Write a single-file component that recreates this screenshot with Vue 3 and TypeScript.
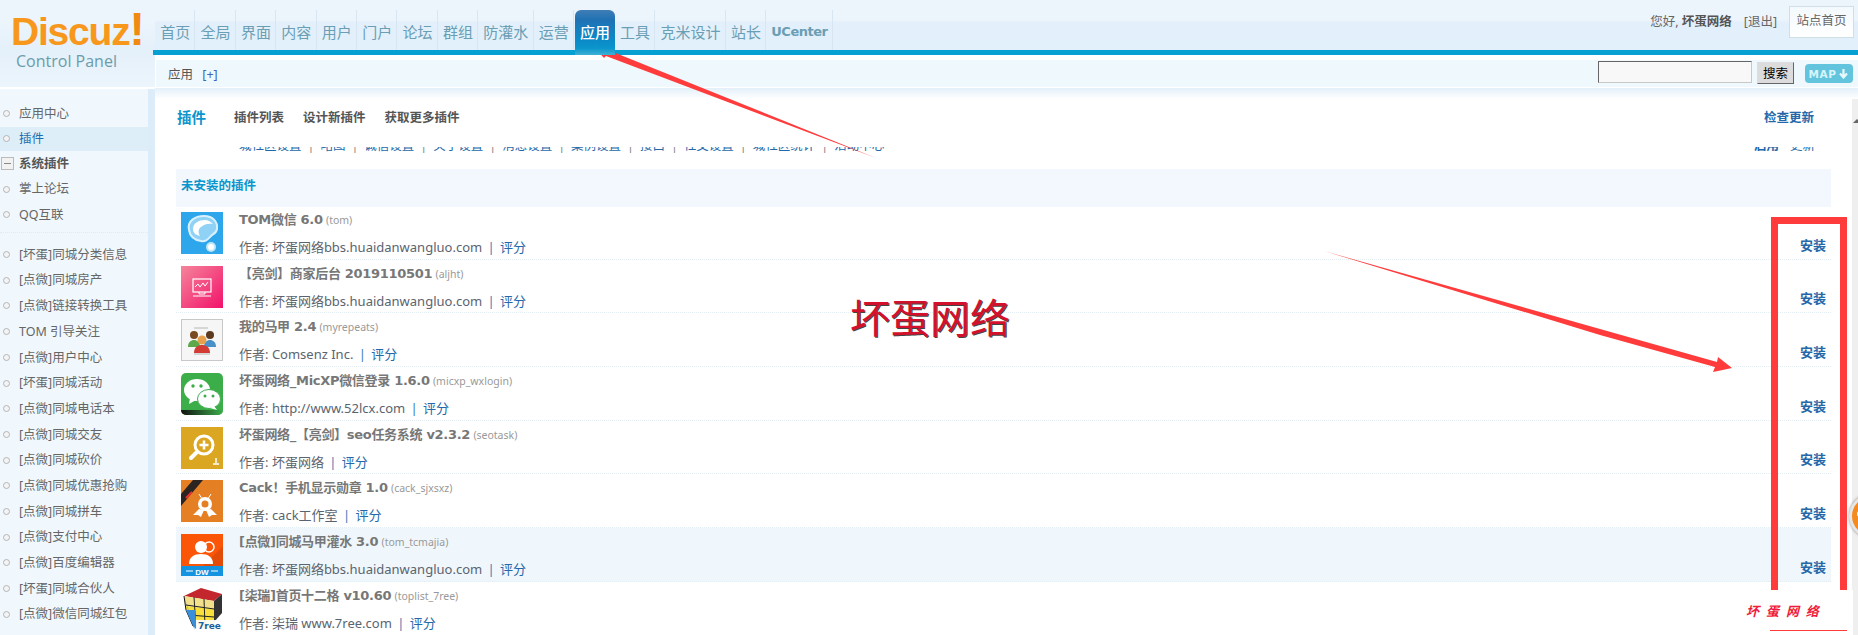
<script setup lang="ts">
const navItems: string[] = ['首页','全局','界面','内容','用户','门户','论坛','群组','防灌水','运营','应用','工具','克米设计','站长','UCenter']
const sideTop: { t: string; on?: boolean; group?: boolean }[] = [
  { t: '应用中心' }, { t: '插件', on: true }, { t: '系统插件', group: true }, { t: '掌上论坛' }, { t: 'QQ互联' }
]
const sideList: string[] = ['[坏蛋]同城分类信息','[点微]同城房产','[点微]链接转换工具','TOM 引导关注','[点微]用户中心','[坏蛋]同城活动','[点微]同城电话本','[点微]同城交友','[点微]同城砍价','[点微]同城优惠抢购','[点微]同城拼车','[点微]支付中心','[点微]百度编辑器','[坏蛋]同城合伙人','[点微]微信同城红包']
const cutLinks: string[] = ['城社区设置','略图','诚信设置','关于设置','消息设置','案例设置','接口','社交设置','城社区统计','活动中心']
interface Row { icon: string; title: string; id: string; author: string; hl?: boolean }
const site = '坏蛋网络bbs.huaidanwangluo.com'
const rows: Row[] = [
  { icon: 'tom', title: 'TOM微信 6.0', id: '(tom)', author: site },
  { icon: 'pink', title: '【亮剑】商家后台 2019110501', id: '(aljht)', author: site },
  { icon: 'group', title: '我的马甲 2.4', id: '(myrepeats)', author: 'Comsenz Inc.' },
  { icon: 'wx', title: '坏蛋网络_MicXP微信登录 1.6.0', id: '(micxp_wxlogin)', author: 'http://www.52lcx.com' },
  { icon: 'seo', title: '坏蛋网络_【亮剑】seo任务系统 v2.3.2', id: '(seotask)', author: '坏蛋网络' },
  { icon: 'cack', title: 'Cack！手机显示勋章 1.0', id: '(cack_sjxsxz)', author: 'cack工作室' },
  { icon: 'dw', title: '[点微]同城马甲灌水 3.0', id: '(tom_tcmajia)', author: site, hl: true },
  { icon: 'cube', title: '[柒瑞]首页十二格 v10.60', id: '(toplist_7ree)', author: '柒瑞 www.7ree.com' }
]
</script>

<template>
  <div class="page">
    <aside class="aside">
      <div class="logo">
        <div class="discuz">Discuz<span class="bang">!</span></div>
        <div class="cp">Control Panel</div>
      </div>
      <div class="side">
        <ul class="side-top">
          <li v-for="s in sideTop" :key="s.t" :class="{ on: s.on, group: s.group }">
            <i v-if="s.group" class="minus"></i><i v-else class="dot"></i>{{ s.t }}
          </li>
        </ul>
        <ul class="side-list">
          <li v-for="s in sideList" :key="s"><i class="dot"></i>{{ s }}</li>
        </ul>
      </div>
    </aside>

    <div class="main">
      <header class="top">
        <nav class="nav">
          <a v-for="n in navItems" :key="n" :class="{ cur: n === '应用', en: n === 'UCenter' }">{{ n }}</a>
        </nav>
        <div class="user">
          <span>您好, <b>坏蛋网络</b></span>
          <span class="out">[退出]</span>
          <span class="home">站点首页</span>
        </div>
      </header>
      <div class="line"></div>
      <div class="sub">
        <span class="crumb">应用 <em>[+]</em></span>
        <div class="search">
          <input class="inp" type="text" />
          <button class="btn" type="button">搜索</button>
          <span class="map">MAP
            <svg width="11" height="11" viewBox="0 0 11 11"><path d="M5.5 1v8M2 5.5l3.5 4 3.5-4" fill="none" stroke="#e8f8fc" stroke-width="2.2"/></svg>
          </span>
        </div>
      </div>
      <div class="fade"></div>

      <div class="body">
        <div class="content">
          <div class="tabs">
            <b class="t-main">插件</b>
            <span class="t">插件列表</span>
            <span class="t">设计新插件</span>
            <span class="t">获取更多插件</span>
            <span class="check">检查更新</span>
          </div>
          <div class="cut">
            <div class="cut-in">
              <div class="cut-links">
                <template v-for="(c, i) in cutLinks" :key="c">
                  <span v-if="i" class="bar">|</span><a>{{ c }}</a>
                </template>
              </div>
              <div class="cut-ops"><b>启用</b><a>更新</a></div>
            </div>
          </div>
          <div class="band">未安装的插件</div>
          <div class="rows">
            <div v-for="r in rows" :key="r.id" class="row" :class="{ hl: r.hl }">
              <div class="ico">
                <svg v-if="r.icon === 'tom'" viewBox="0 0 42 42" width="42" height="42">
                  <rect width="42" height="42" fill="#2ea6ec"/>
                  <path d="M8 18C6 9 14 4 23 4c9 0 14 6 13 13-.5 4-4 5-6 7-3 3-5 6-10 5C14 28 9 25 8 18z" fill="#8fd2f6" stroke="#d9f1fd" stroke-width="2"/>
                  <path d="M12 17c0-6 6-9 12-9 3 0 6 2 8 4-4-1-9 0-12 3-3 2-3 6-1 9-4-1-7-3-7-7z" fill="#fff"/>
                  <circle cx="30" cy="35" r="5" fill="#bfe6fa"/><circle cx="30" cy="35" r="3" fill="#fff"/>
                </svg>
                <svg v-else-if="r.icon === 'pink'" viewBox="0 0 42 42" width="42" height="42">
                  <defs><linearGradient id="gp" x1="0" y1="0" x2="1" y2="1"><stop offset="0" stop-color="#f5859b"/><stop offset="1" stop-color="#f2126a"/></linearGradient></defs>
                  <rect width="42" height="42" fill="url(#gp)"/>
                  <rect x="12" y="13" width="18" height="13" fill="none" stroke="#fff" stroke-width="1.2"/>
                  <path d="M14 21l3-3 2 3 3-4 2 3 3-4" fill="none" stroke="#fff" stroke-width="1"/>
                  <path d="M18 26v2h6v-2M12 30h18" fill="none" stroke="#fff" stroke-width="1"/>
                </svg>
                <svg v-else-if="r.icon === 'group'" viewBox="0 0 42 42" width="42" height="42">
                  <rect x=".5" y=".5" width="41" height="41" fill="#f6f6f6" stroke="#c8c8c8"/>
                  <path d="M13 9h14M13 35h16" stroke="#ccc" stroke-width="1.5"/>
                  <circle cx="13" cy="16" r="4" fill="#7a4a20"/><path d="M7 28c0-5 3-7 6-7s6 2 6 7z" fill="#5da84a"/>
                  <circle cx="29" cy="16" r="4" fill="#5b3a20"/><path d="M23 28c0-5 3-7 6-7s6 2 6 7z" fill="#4a90c8"/>
                  <circle cx="21" cy="21" r="4.5" fill="#e7a04c"/><path d="M13 34c0-6 4-8 8-8s8 2 8 8z" fill="#d23c34"/>
                </svg>
                <svg v-else-if="r.icon === 'wx'" viewBox="0 0 42 42" width="42" height="42">
                  <rect width="42" height="42" rx="5" fill="#3bae4a"/>
                  <path d="M0 37h42v0a5 5 0 0 1-5 5H5a5 5 0 0 1-5-5z" fill="url(#gw)"/>
                  <defs><linearGradient id="gw"><stop offset="0" stop-color="#111"/><stop offset="1" stop-color="#3bae4a"/></linearGradient></defs>
                  <ellipse cx="16" cy="17" rx="13" ry="11" fill="#fff"/><path d="M9 25l-1 6 7-4z" fill="#fff"/>
                  <circle cx="12" cy="13" r="1.7" fill="#3bae4a"/><circle cx="20" cy="13" r="1.7" fill="#3bae4a"/>
                  <ellipse cx="28" cy="26" rx="11.5" ry="9.5" stroke="#3bae4a" fill="#fff"/><path d="M33 33l3 4-7-2z" fill="#fff"/>
                  <circle cx="24" cy="23" r="1.5" fill="#3bae4a"/><circle cx="32" cy="23" r="1.5" fill="#3bae4a"/>
                </svg>
                <svg v-else-if="r.icon === 'seo'" viewBox="0 0 42 42" width="42" height="42">
                  <rect width="42" height="42" fill="#dba622"/>
                  <circle cx="23" cy="18" r="9" fill="none" stroke="#fff" stroke-width="3"/>
                  <path d="M16 25l-6 6" stroke="#fff" stroke-width="4" stroke-linecap="round"/>
                  <path d="M23 13.500v9M18.500 18h9" stroke="#fff" stroke-width="2.500"/>
                  <path d="M35 31v5M32 37h6" stroke="#fff" stroke-width="1.500"/>
                </svg>
                <svg v-else-if="r.icon === 'cack'" viewBox="0 0 42 42" width="42" height="42">
                  <rect width="42" height="42" fill="#e57f24"/>
                  <path d="M0 26L22 0h-10L0 14z" fill="#2c2420"/>
                  <path d="M18 14l5 8M30 14l-5 8" stroke="#fff" stroke-width="1"/>
                  <circle cx="24" cy="24" r="7" fill="#fff"/><circle cx="24" cy="24" r="3.500" fill="#e57f24"/>
                  <path d="M18 29l-6 6 5 0 3 2 3-7zM30 29l6 6-5 0-3 2-3-7z" fill="#fff"/>
                  <path d="M5 18l6-6" stroke="#e33" stroke-width="2"/>
                </svg>
                <svg v-else-if="r.icon === 'dw'" viewBox="0 0 42 42" width="42" height="42">
                  <rect width="42" height="42" fill="#fb5607"/>
                  <path d="M42 12v20H22z" fill="#e24c08"/>
                  <rect y="32" width="42" height="10" fill="#1493e0"/>
                  <path d="M5 37h7M30 37h7" stroke="#fff" stroke-width="1.200"/>
                  <circle cx="28" cy="13" r="5" fill="none" stroke="#fff" stroke-width="1.500"/>
                  <circle cx="20" cy="13" r="6" fill="#fff"/>
                  <path d="M8 30c0-7 5-10 12-10s12 3 12 10z" fill="#fff"/>
                  <text x="21" y="40.500" class="dw">DW</text>
                </svg>
                <svg v-else viewBox="0 0 42 42" width="42" height="42">
                  <path d="M20 0L41 6 33 13 3 8z" fill="#c4262e"/>
                  <path d="M3 8l30 5v8L4 18z" fill="#f2e08a"/>
                  <path d="M4 18l29 3v21L12 38z" fill="#f8df3c"/>
                  <path d="M3 8l9 30 2 4" fill="#2c7fd0"/>
                  <path d="M33 13l8-7v19l-8 9z" fill="#333"/>
                  <path d="M3 8l2 14 7 16" fill="none" stroke="#111"/>
                  <path d="M13 9l2 31M23 11l1 27M5 17l28 4M8 27l25 2" stroke="#222" stroke-width="1" fill="none"/>
                  <path d="M5 22l7 16 4 4-2-20z" fill="#3b8fd8"/>
                  <rect x="15" y="32" width="27" height="10" fill="#fff" opacity=".9"/>
                  <text x="17" y="41" class="seven">7ree</text>
                </svg>
              </div>
              <div class="info">
                <div class="title"><b>{{ r.title }}</b> <small>{{ r.id }}</small></div>
                <div class="auth">作者: <span>{{ r.author }}</span> <i>|</i> <a>评分</a></div>
              </div>
              <a class="install">安装</a>
            </div>
          </div>
        </div>
        <div class="scroll"><span class="thumb"></span></div>
      </div>
    </div>

    <!-- annotation layer drawn on top of the screenshot -->
    <svg class="anno" width="1858" height="635" viewBox="0 0 1858 635">
      <polygon points="592,45 611,46 608,50 876,158 606,56 604,58" fill="#ff3b3b"/>
      <polygon points="1324,251 1600,329 1717,362 1718,357 1732,368 1713,372 1715,367 1600,335" fill="#ff3b3b"/>
    </svg>
    <div class="redbox"></div>
    <div class="big">坏蛋网络</div>
    <div class="float"><span></span></div>
    <div class="mark">
      <span>坏 蛋 网 络</span>
      <i></i>
    </div>
  </div>
</template>

<style>
html, body { margin: 0; background: #fff; }
</style>

<style scoped>
.page {
  position: relative;
  width: 1858px;
  height: 635px;
  overflow: hidden;
  display: flex;
  background: #fff;
  font-family: "Noto Sans", "Noto Sans CJK SC", sans-serif;
  font-size: 12.5px;
  color: #666;
}
ul { list-style: none; margin: 0; padding: 0; }
a { text-decoration: none; }

.aside { width: 155px; flex: none; display: flex; flex-direction: column; background: #f0f8fd; }
.logo {
  height: 87px;
  border-bottom: 2px solid #fff;
  background: linear-gradient(#edf5fc 0, #edf5fc 20px, #e4f0fa 50px, #ecf5fc 87px);
  box-sizing: content-box;
  padding-left: 11px;
  margin-right: 0;
}
.discuz {
  padding-top: 11px;
  font: bold 39px/42px "Liberation Sans", sans-serif;
  letter-spacing: -1.2px;
  color: #f7981d;
}
.bang { color: #f08a10; font-size: 46px; line-height: 30px; }
.cp {
  margin-top: -2px;
  padding-left: 5px;
  font: 16px/20px "Open Sans", sans-serif;
  color: #6b9cab;
}
.side { flex: 1; border-right: 7px solid #dcecf8; padding-top: 12px; }
.side-top li, .side-list li {
  height: 25.7px;
  line-height: 25.7px;
  display: flex;
  align-items: center;
  white-space: nowrap;
}
.side-top { padding-bottom: 4px; border-bottom: 1px dotted #e0ecf2; }
.side-list { padding-top: 9px; }
.side-top li.on { background: #ddeef9; color: #1f6fae; height: 24px; line-height: 24px; }
.side-top li.group { font-weight: 700; color: #555; }
.dot {
  width: 5px; height: 5px;
  margin: 0 9px 0 3px;
  border: 1px solid #b4b4b4;
  border-radius: 50%;
  background: #f4f4f4;
  flex: none;
}
.minus {
  position: relative;
  width: 11px; height: 11px;
  margin: 0 5px 0 1px;
  border: 1px solid #bbb;
  background: #f2f2f2;
  flex: none;
}
.minus::after { content: ""; position: absolute; left: 2px; right: 2px; top: 5px; height: 1px; background: #888; }

.main { flex: 1; min-width: 0; display: flex; flex-direction: column; }
.top {
  height: 50px;
  flex: none;
  display: flex;
  justify-content: space-between;
  background: linear-gradient(#edf5fc 0, #edf5fc 20px, #e3f0fb 22px, #e2f0fb 50px);
}
.nav { display: flex; align-items: flex-start; padding-top: 10px; padding-left: 0; height: 40px; }
.nav a {
  height: 40px;
  line-height: 44px;
  padding: 0 5.2px;
  font-size: 15px;
  color: #6a9eb4;
  box-shadow: inset -1px 0 #d7e6f1;
  white-space: nowrap;
}
.nav a.en { font-weight: 700; font-size: 13px; font-family: "DejaVu Sans", sans-serif; letter-spacing: -.5px; }
.nav a.cur {
  position: relative;
  height: 45px;
  margin-left: 1px;
  padding: 0 5px;
  border-radius: 6px 6px 0 0;
  background: linear-gradient(#3f7db5 0, #1f72b4 10px, #0b8ac8 30px, #0a94cc 38px, #3eb1d4 45px);
  color: #fff;
  font-weight: 500;
  box-shadow: none;
  z-index: 1;
}
.user { display: flex; align-items: flex-start; padding-top: 6px; padding-right: 4px; line-height: 32px; font-size: 12.5px; }
.user b { color: #555; }
.out { margin-left: 12px; }
.home {
  margin-left: 12px;
  width: 63px; height: 30px;
  text-align: center;
  border: 1px solid #cfdfe6;
  background: linear-gradient(#f3f9fd, #fff);
  line-height: 28px;
}
.line { height: 5px; flex: none; margin-left: -2px; background: #06a0d2; }
.sub {
  height: 27px;
  flex: none;
  margin: 5px 0 0 1px;
  padding-right: 5px;
  display: flex;
  align-items: center;
  justify-content: space-between;
  background: #eff8fd;
}
.crumb { padding-left: 12px; color: #555; }
.crumb em { font-style: normal; color: #3d68b0; margin-left: 6px; }
.search { display: flex; align-items: flex-start; margin-top: -1px; height: 24px; }
.inp {
  width: 154px; height: 22px;
  box-sizing: border-box;
  border: 1px solid #c8c8c8;
  border-top-color: #666; border-left-color: #666;
  background: #f8f8f8;
  padding: 0;
}
.btn {
  width: 37px; height: 22px;
  margin: 1px 0 0 5px;
  padding: 0;
  border: 1px solid #ddd;
  border-right-color: #666; border-bottom-color: #666;
  background: #dcdcdc;
  color: #000;
  font: 12.5px/18px "Noto Sans CJK SC", sans-serif;
}
.map {
  width: 48px; height: 19px;
  margin: 3px 0 0 11px;
  display: flex; align-items: center; justify-content: center; gap: 2px;
  border-radius: 4px;
  background: #62c5dd;
  color: #d9f4fa;
  font: bold 10.5px "DejaVu Sans", sans-serif;
  letter-spacing: .5px;
}
.fade { height: 11px; flex: none; margin-top: 1px; background: linear-gradient(#e3f0f9, #fff); }

.body { flex: 1; min-height: 0; display: flex; }
.content { flex: 1; min-width: 0; padding: 0 21px; }
.scroll { position: relative; width: 6px; flex: none; background: #efefef; }
.thumb { position: absolute; left: 1px; top: 20px; width: 0; height: 0; border: 4px solid transparent; border-bottom-color: #666; border-top: 0; }

.tabs { height: 34px; display: flex; align-items: center; padding-left: 1px; font-size: 12.5px; }
.t-main { width: 57px; color: #0a96cc; font-size: 14.500px; }
.t { margin-right: 19px; font-weight: 700; color: #555; }
.check { margin-left: auto; margin-right: 17px; font-weight: 700; color: #2468a9; }
.cut { height: 7px; margin-top: 14px; overflow: hidden; }
.cut-in { margin-top: -10px; display: flex; justify-content: space-between; line-height: 18px; padding: 0 16px 0 63px; color: #2468a9; }
.cut-links { display: flex; }
.cut-links a { color: #2468a9; }
.bar { margin: 0 6px; color: #888; }
.cut-ops b { margin-right: 11px; }
.band {
  height: 38px;
  margin-top: 15px;
  padding-left: 5px;
  line-height: 34px;
  background: #f2f8fd;
  color: #0a96cc;
  font-weight: 700;
  font-size: 12.500px;
}
.rows { margin-top: -1px; }
.row {
  height: 53.7px;
  box-sizing: border-box;
  display: flex;
  border-bottom: 1px dotted #e3eef4;
  padding: 6px 5px 0;
}
.row.hl { background: #f0f7fc; }
.ico { width: 42px; height: 42px; flex: none; }
.ico svg { display: block; }
.info { flex: 1; padding-left: 16px; min-width: 0; }
.title { height: 16px; line-height: 16px; margin-top: 0; white-space: nowrap; }
.title b { color: #777; font: bold 13px/16px "DejaVu Sans", "Noto Sans CJK SC", sans-serif; letter-spacing: -.3px; }
.title small { color: #999; font-size: 10.500px; }
.auth { margin-top: 11px; line-height: 16px; color: #666; white-space: nowrap; font-size: 13px; }
.auth span { color: #5a6470; }
.auth i { font-style: normal; color: #3a7ab5; margin: 0 2px; }
.auth a { color: #2468a9; }
.install { align-self: flex-end; margin-bottom: 6px; color: #2468a9; font-weight: 700; font-size: 13px; line-height: 16px; }

.dw { font: bold 8px "Liberation Sans", sans-serif; fill: #fff; text-anchor: middle; }
.seven { font: bold 9px "DejaVu Sans", sans-serif; fill: #1a5fa0; }

.anno { position: absolute; left: 0; top: 0; pointer-events: none; }
.redbox {
  position: absolute;
  left: 1771px; top: 217px;
  width: 62px; height: 380px;
  border: 7px solid #ff3b3b;
}
.big {
  position: absolute;
  left: 850px; top: 288px;
  font: 400 40px/56px "Noto Sans CJK SC", sans-serif;
  color: #d4112c;
  text-shadow: 1px 1px 0 #444;
  white-space: nowrap;
}
.float {
  position: absolute;
  left: 1849px; top: 494px;
  width: 38px; height: 38px;
  border-radius: 50%;
  background: #f58a1f;
  border: 3px solid #e6e6e6;
  box-shadow: 0 0 3px #888;
}
.float span { position: absolute; left: 5px; top: 14px; width: 6px; height: 6px; border-radius: 50%; background: #fff; }
.mark {
  position: absolute;
  left: 1730px; top: 590px;
  width: 123px; height: 45px;
  background: #fff;
  text-align: left;
}
.mark span {
  display: block;
  padding: 12px 0 0 16px;
  font: italic 700 13px/18px "Noto Sans CJK SC", sans-serif;
  color: #ee1c3a;
  letter-spacing: 2px;
  white-space: nowrap;
}
.mark i { position: absolute; left: 40px; top: 40px; width: 77px; height: 1px; background: #ff3b3b; }
</style>
